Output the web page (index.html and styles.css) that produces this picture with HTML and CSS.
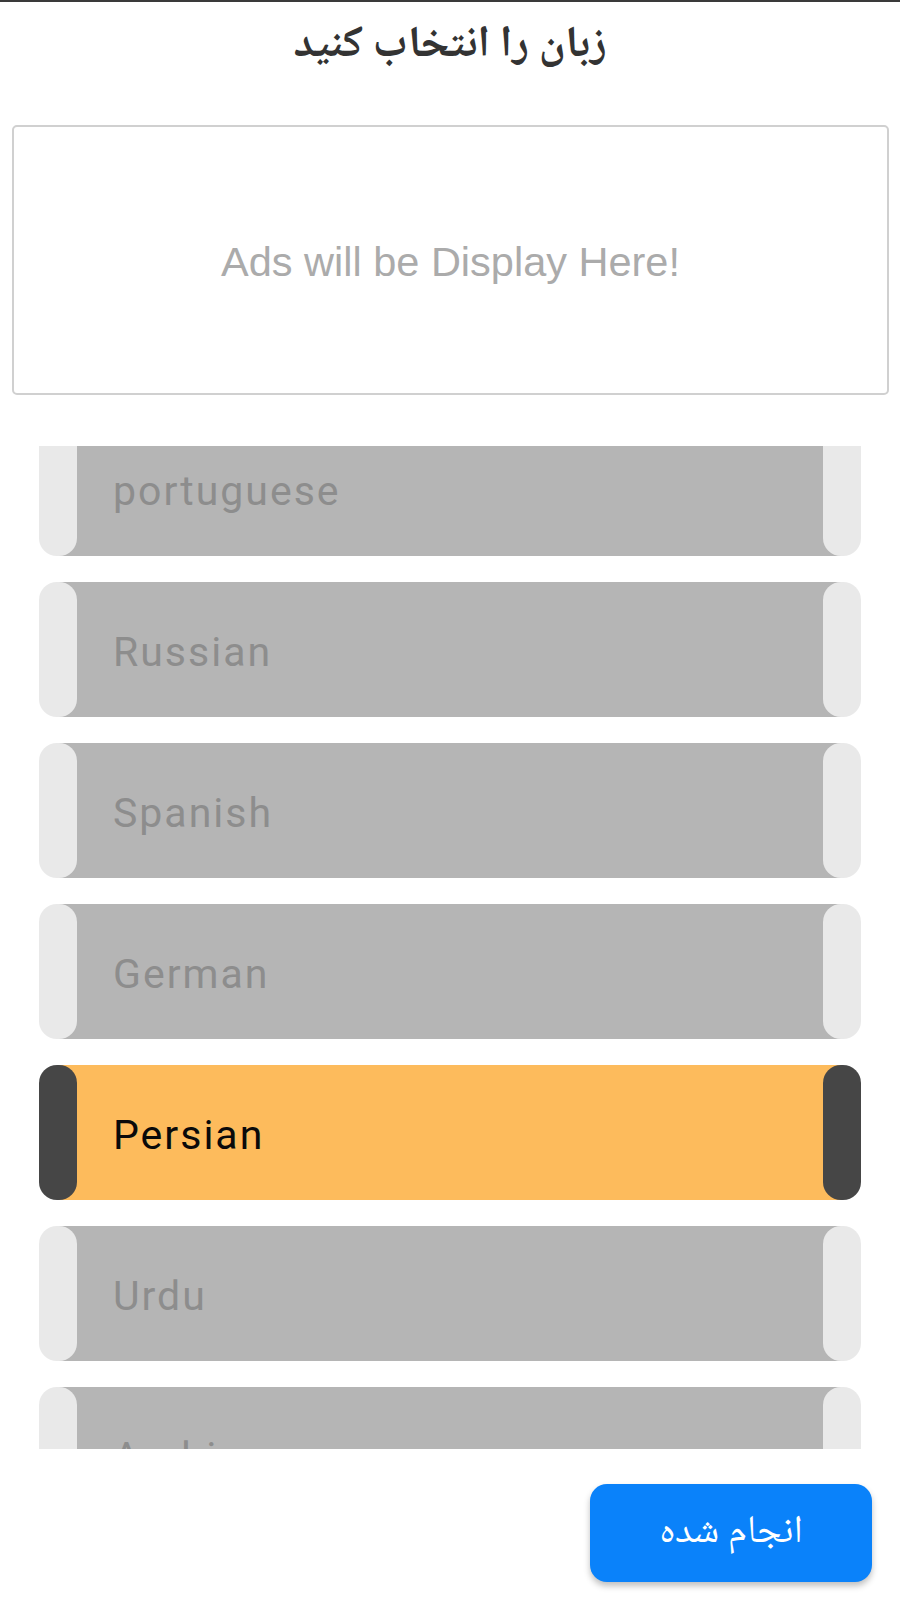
FILE: index.html
```html
<!DOCTYPE html>
<html lang="fa">
<head>
<meta charset="utf-8">
<title>انتخاب زبان</title>
<link rel="stylesheet" href="styles.css">
</head>
<body>
<div class="page">
  <header class="header">
    <h1 class="title" dir="rtl">زبان را انتخاب کنید</h1>
  </header>
  <div class="ad-box">
    <span class="ad-text">Ads will be Display Here!</span>
  </div>
  <div class="list">
    <div class="list-inner">
      <div class="item"><span class="cap"></span><span class="label">portuguese</span><span class="cap"></span></div>
      <div class="item"><span class="cap"></span><span class="label">Russian</span><span class="cap"></span></div>
      <div class="item"><span class="cap"></span><span class="label">Spanish</span><span class="cap"></span></div>
      <div class="item"><span class="cap"></span><span class="label">German</span><span class="cap"></span></div>
      <div class="item selected"><span class="cap"></span><span class="label">Persian</span><span class="cap"></span></div>
      <div class="item"><span class="cap"></span><span class="label">Urdu</span><span class="cap"></span></div>
      <div class="item"><span class="cap"></span><span class="label">Arabic</span><span class="cap"></span></div>
    </div>
  </div>
  <div class="footer">
    <button class="done-btn" dir="rtl">انجام شده</button>
  </div>
</div>
</body>
</html>
```
FILE: styles.css
```css
html, body {
  margin: 0;
  padding: 0;
  background: #ffffff;
}

.page {
  width: 900px;
  height: 1600px;
  box-sizing: border-box;
  border-top: 2px solid #3a3a3a;
  display: flex;
  flex-direction: column;
  font-family: Roboto, "Liberation Sans", sans-serif;
}

.header {
  height: 123px;
  display: flex;
  justify-content: center;
  align-items: flex-start;
}

.title {
  margin: 16px 0 0 0;
  font-family: "Noto Naskh Arabic", "Noto Sans Arabic", "DejaVu Sans", sans-serif;
  font-size: 44px;
  font-weight: bold;
  color: #333333;
  line-height: 58px;
}

.ad-box {
  margin: 0 11px 0 12px;
  height: 270px;
  box-sizing: border-box;
  border: 2px solid #d0d0d0;
  border-radius: 5px;
  display: flex;
  align-items: center;
  justify-content: center;
}

.ad-text {
  font-family: "Liberation Sans", Arial, sans-serif;
  font-size: 41.5px;
  color: #ababab;
  margin-top: 4px;
}

.list {
  margin: 51px 39px 0 39px;
  height: 1003px;
  overflow: hidden;
}

.list-inner {
  display: flex;
  flex-direction: column;
  gap: 26px;
  margin-top: -25px;
}

.item {
  height: 135px;
  display: flex;
  align-items: stretch;
  background: linear-gradient(to right, transparent 19px, #b5b5b5 19px, #b5b5b5 calc(100% - 19px), transparent calc(100% - 19px));
  flex-shrink: 0;
}

.cap {
  width: 38px;
  flex-shrink: 0;
  border-radius: 18px;
  background: #e9e9e9;
}

.label {
  flex: 1;
  display: flex;
  align-items: center;
  padding-left: 36px;
  padding-top: 5px;
  font-size: 41px;
  letter-spacing: 2px;
  color: #8d8d8d;
}

.item.selected {
  background: linear-gradient(to right, transparent 19px, #fdbb5c 19px, #fdbb5c calc(100% - 19px), transparent calc(100% - 19px));
}

.item.selected .cap {
  background: #464646;
}

.item.selected .label {
  color: #0a0a0a;
}

.footer {
  display: flex;
  justify-content: flex-end;
  padding: 35px 28px 0 0;
}

.done-btn {
  width: 282px;
  height: 98px;
  border: none;
  border-radius: 17px;
  background: #0a82fa;
  color: #ffffff;
  font-family: "Noto Naskh Arabic", "Noto Sans Arabic", "DejaVu Sans", sans-serif;
  font-size: 39px;
  box-shadow: 0 4px 6px rgba(0, 0, 0, 0.25);
  cursor: pointer;
}
```
